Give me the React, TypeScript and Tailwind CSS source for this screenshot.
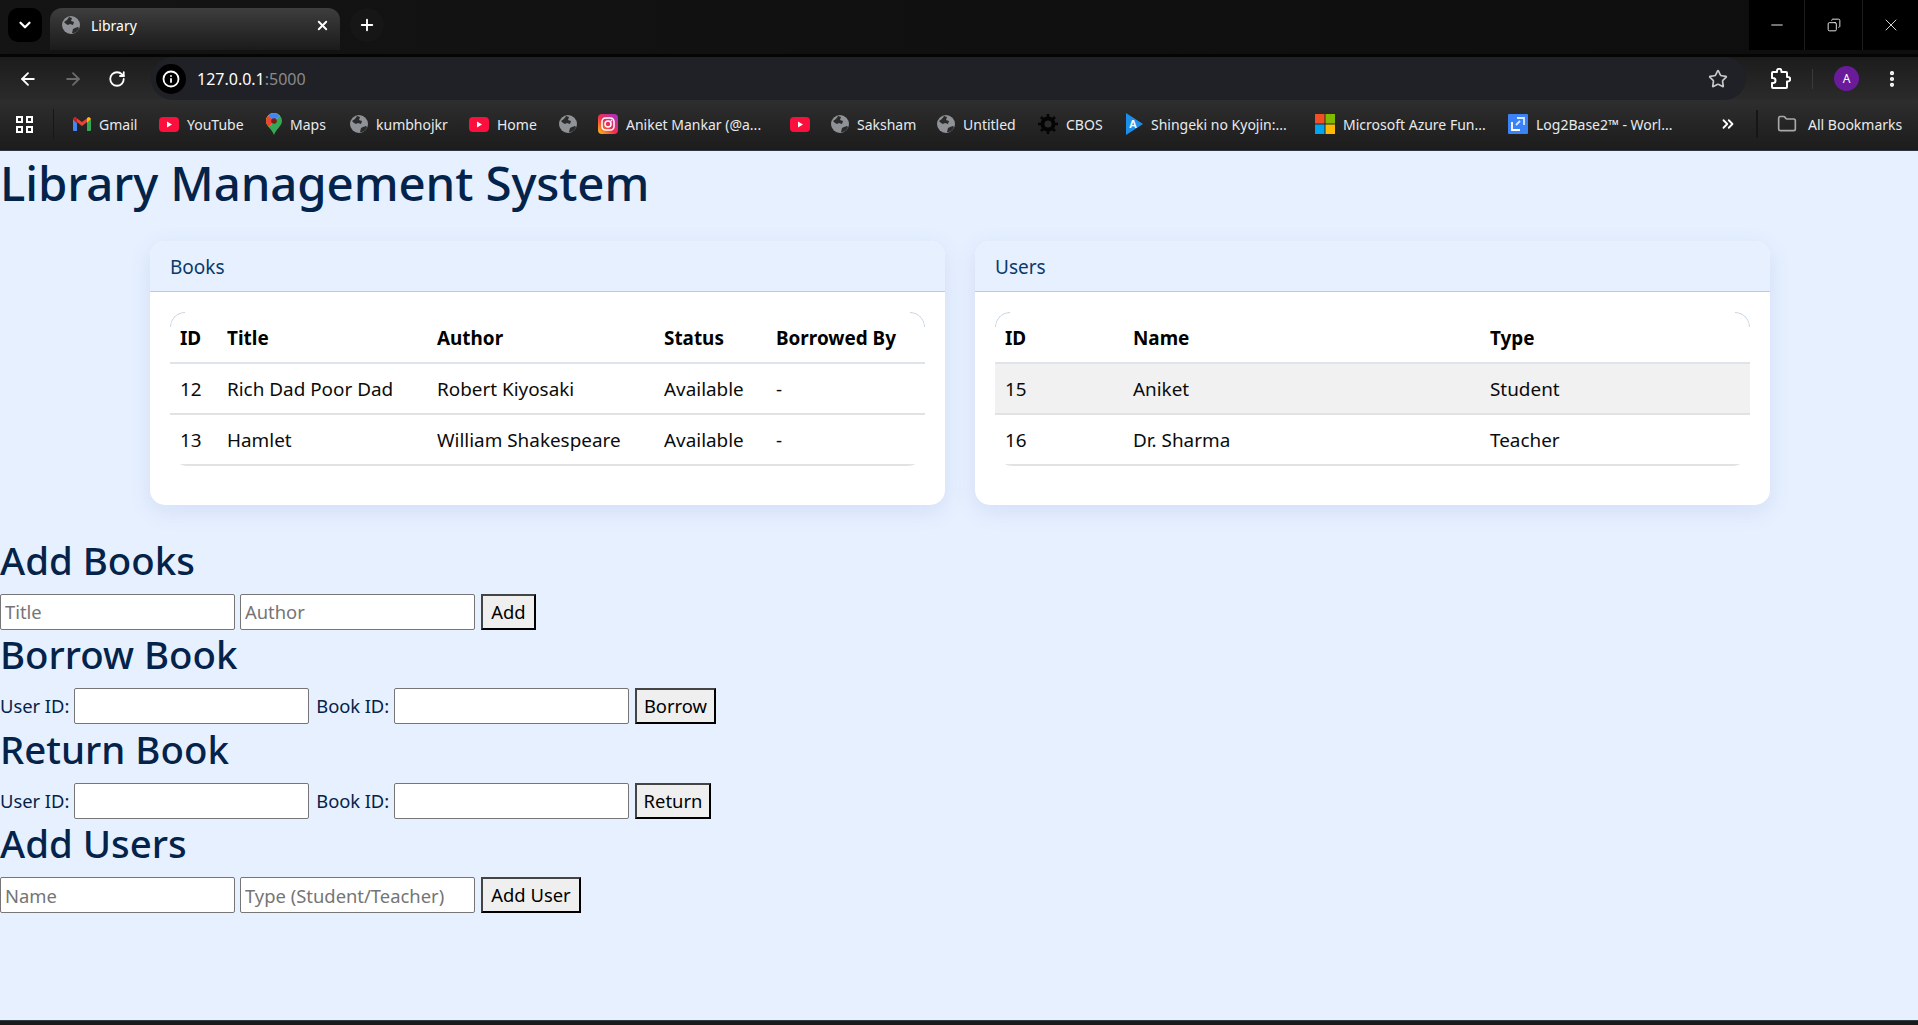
import * as React from "react";
import {
  ArrowLeft,
  ArrowRight,
  ChevronDown,
  ChevronsRight,
  Copy,
  EllipsisVertical,
  Folder,
  Info,
  Minus,
  Plus,
  RotateCw,
  Star,
  X,
} from "lucide-react";

const font = "font-['Noto_Sans',sans-serif]";

function Globe({ className = "w-[18px] h-[18px]" }: { className?: string }) {
  return (
    <svg viewBox="0 0 18 18" className={className}>
      <circle cx="9" cy="9" r="9" fill="#8f9297" />
      <path d="M2 6c2-1 4-3 5-5l3 1-1 3 3 1-1 3-3-1-2 1-2-1z" fill="#2b2b2b" />
      <path d="M10 17l1-4 2-1 3-1 1 1c-1 3-3 5-7 5z" fill="#2b2b2b" />
    </svg>
  );
}

function YouTube() {
  return (
    <svg viewBox="0 0 20 15" className="w-5 h-[15px]">
      <rect width="20" height="15" rx="4" fill="#fb0f3c" />
      <path d="M8 4.5l5 3-5 3z" fill="#fff" />
    </svg>
  );
}

function Gmail() {
  return (
    <svg viewBox="0 0 18 14" className="w-[18px] h-[14px]">
      <path d="M0 2v11a1 1 0 0 0 1 1h3V6z" fill="#4285f4" />
      <path d="M14 6v8h3a1 1 0 0 0 1-1V2z" fill="#34a853" />
      <path d="M0 2l9 7 9-7-2-2-7 5-7-5z" fill="#ea4335" />
      <path d="M0 2l4 4V1L2 0z" fill="#c5221f" />
      <path d="M14 1v5l4-4-2-2z" fill="#fbbc04" />
    </svg>
  );
}

function MapsPin() {
  return (
    <svg viewBox="0 0 16 22" className="w-4 h-[22px]">
      <path d="M8 0a8 8 0 0 1 8 8c0 5-6 8-8 14C6 16 0 13 0 8a8 8 0 0 1 8-8z" fill="#34a853" />
      <path d="M8 0a8 8 0 0 1 6 2.7L3 14C1.500 12 0 10.500 0 8a8 8 0 0 1 8-8z" fill="#fbbc04" />
      <path d="M2 2.700A8 8 0 0 1 8 0a8 8 0 0 1 6 2.700L8 8z" fill="#4285f4" />
      <path d="M0 8a8 8 0 0 1 2-5.300L8 8l-5 6C1.500 12 0 10.500 0 8z" fill="#ea4335" />
      <circle cx="8" cy="8" r="2.800" fill="#7a1f16" />
    </svg>
  );
}

function Instagram() {
  return (
    <svg viewBox="0 0 20 20" className="w-5 h-5">
      <defs>
        <linearGradient id="ig" x1="0" y1="1" x2="1" y2="0">
          <stop offset="0" stopColor="#fdc30d" />
          <stop offset="0.45" stopColor="#f0304f" />
          <stop offset="1" stopColor="#a52fd0" />
        </linearGradient>
      </defs>
      <rect width="20" height="20" rx="4" fill="url(#ig)" />
      <rect x="4" y="4" width="12" height="12" rx="3.500" fill="none" stroke="#fff" strokeWidth="1.500" />
      <circle cx="10" cy="10" r="3" fill="none" stroke="#fff" strokeWidth="1.500" />
      <circle cx="13.500" cy="6.500" r="0.900" fill="#fff" />
    </svg>
  );
}

function Gear() {
  return (
    <svg viewBox="0 0 20 20" className="w-5 h-5">
      <circle cx="10" cy="10" r="5.500" fill="none" stroke="#050505" strokeWidth="4" />
      <g stroke="#050505" strokeWidth="2.600">
        <path d="M10 0v20M0 10h20M3 3l14 14M17 3L3 17" />
      </g>
      <circle cx="10" cy="10" r="3.500" fill="#2a2a2a" />
    </svg>
  );
}

function Shingeki() {
  return (
    <svg viewBox="0 0 17 22" className="w-[17px] h-[22px]">
      <path d="M0 0l17 11L0 22z" fill="#1d8fe8" />
      <text x="3" y="15" fontSize="11" fontWeight="700" fill="#fff" fontFamily="Liberation Sans, sans-serif">
        A
      </text>
    </svg>
  );
}

function Microsoft() {
  return (
    <svg viewBox="0 0 20 20" className="w-5 h-5">
      <rect width="9.500" height="9.500" fill="#f25022" />
      <rect x="10.500" width="9.500" height="9.500" fill="#7fba00" />
      <rect y="10.500" width="9.500" height="9.500" fill="#00a4ef" />
      <rect x="10.500" y="10.500" width="9.500" height="9.500" fill="#ffb900" />
    </svg>
  );
}

function Log2() {
  return (
    <svg viewBox="0 0 20 20" className="w-5 h-5">
      <rect width="20" height="20" rx="1" fill="#3b82f6" />
      <path d="M4 8v8h8" fill="none" stroke="#fff" strokeWidth="1.800" />
      <path d="M9 4h7v7M8 11l4-4" fill="none" stroke="#dbeafe" strokeWidth="1.800" />
    </svg>
  );
}

function ExtensionPuzzle() {
  return (
    <svg viewBox="0 0 22 22" className="w-[22px] h-[22px]" fill="none" stroke="#fff" strokeWidth="2" strokeLinejoin="round">
      <path d="M8 4V3a2.200 2.200 0 0 1 4.400 0v1H17a1 1 0 0 1 1 1v4h1a2.200 2.200 0 0 1 0 4.400h-1V19a1 1 0 0 1-1 1H4a1 1 0 0 1-1-1v-4h1a2.500 2.500 0 0 0 0-5H3V5a1 1 0 0 1 1-1z" />
    </svg>
  );
}

const bookmarks = [
  { icon: <Gmail />, label: "Gmail", w: "w-[86px]" },
  { icon: <YouTube />, label: "YouTube", w: "w-[107px]" },
  { icon: <MapsPin />, label: "Maps", w: "w-[84px]" },
  { icon: <Globe />, label: "kumbhojkr", w: "w-[119px]" },
  { icon: <YouTube />, label: "Home", w: "w-[90px]" },
  { icon: <Globe />, label: "", w: "w-[39px]" },
  { icon: <Instagram />, label: "Aniket Mankar (@a...", w: "w-[192px]" },
  { icon: <YouTube />, label: "", w: "w-[41px]" },
  { icon: <Globe />, label: "Saksham", w: "w-[106px]" },
  { icon: <Globe />, label: "Untitled", w: "w-[101px]" },
  { icon: <Gear />, label: "CBOS", w: "w-[88px]" },
  { icon: <Shingeki />, label: "Shingeki no Kyojin:...", w: "w-[189px]" },
  { icon: <Microsoft />, label: "Microsoft Azure Fun...", w: "w-[193px]" },
  { icon: <Log2 />, label: "Log2Base2™ - Worl...", w: "w-[210px]" },
];

function BrowserChrome() {
  return (
    <div className={`${font} shrink-0 bg-[#050505]`}>
      {/* Tab strip */}
      <div className="h-[54px] flex items-start justify-between bg-gradient-to-r from-[#141414] via-[#101010] to-[#0e0e0e]">
        <div className="flex items-start pt-2 pl-2">
          <div className="w-[34px] h-[34px] rounded-[10px] bg-black flex items-center justify-center">
            <ChevronDown className="w-[18px] h-[18px] text-white" strokeWidth={3} />
          </div>
          <div className="ml-[8px] w-[290px] h-[42px] rounded-t-[12px] bg-gradient-to-b from-[#3e3e3e] to-[#1b1b1b] flex items-center pl-3 pr-[10px] pb-2">
            <Globe className="w-[18px] h-[18px]" />
            <span className="ml-[11px] text-[14px] text-white flex-1">Library</span>
            <X className="w-[15px] h-[15px] text-white" strokeWidth={3} />
          </div>
          <div className="ml-[10px] w-[34px] h-[34px] rounded-full bg-[#161616] flex items-center justify-center">
            <Plus className="w-[18px] h-[18px] text-white" strokeWidth={2.500} />
          </div>
        </div>
        <div className="flex h-[50px] bg-black text-white">
          <div className="w-[56px] flex items-center justify-center border-r border-[#1d1d1d]">
            <Minus className="w-[18px] h-[18px]" strokeWidth={1.200} />
          </div>
          <div className="w-[58px] flex items-center justify-center border-r border-[#1d1d1d]">
            <Copy className="w-[14px] h-[14px] -scale-x-100" strokeWidth={1.500} />
          </div>
          <div className="w-[55px] flex items-center justify-center">
            <X className="w-[20px] h-[20px]" strokeWidth={1} />
          </div>
        </div>
      </div>

      {/* Toolbar */}
      <div className="mt-[3px] h-[43px] flex items-center bg-gradient-to-b from-[#1c1c1c] to-[#2b2b2b]">
        <div className="w-[151px] flex items-center pl-[18px] gap-[25px]">
          <ArrowLeft className="w-5 h-5 text-white" strokeWidth={2.200} />
          <ArrowRight className="w-5 h-5 text-[#6b6b6b]" strokeWidth={2.200} />
          <RotateCw className="w-[18px] h-[18px] text-white" strokeWidth={2.400} />
        </div>
        <div className="w-[1595px] h-[43px] rounded-full bg-[#1f2126] flex items-center pl-[5px] pr-[18px]">
          <div className="w-[30px] h-[30px] rounded-full bg-black flex items-center justify-center">
            <Info className="w-[18px] h-[18px] text-white" strokeWidth={2.400} />
          </div>
          <span className="ml-[11px] text-[16px] text-white flex-1">
            127.0.0.1<span className="text-[#8a8a8a]">:5000</span>
          </span>
          <Star className="w-[20px] h-[20px] text-[#c8c8c8]" strokeWidth={2} />
        </div>
        <div className="flex-1 flex items-center pl-[23px]">
          <ExtensionPuzzle />
          <div className="ml-[21px] w-px h-5 bg-[#3a3a3a]" />
          <div className="ml-[21px] w-[25px] h-[25px] rounded-full bg-[#6a1b9a] flex items-center justify-center text-[12px] text-white">
            A
          </div>
          <EllipsisVertical className="ml-[23px] w-[20px] h-[20px] text-white" strokeWidth={3} />
        </div>
      </div>

      {/* Bookmarks bar */}
      <div className="h-[51px] flex items-center bg-gradient-to-b from-[#2e2e2e] to-[#1c1c1c] border-b border-[#2f3542] pb-[2px]">
        <div className="w-[53px] pl-[16px]">
          <div className="w-[17px] h-[17px] grid grid-cols-2 gap-[3px]">
            <div className="border-2 border-white" />
            <div className="border-2 border-white" />
            <div className="border-2 border-white" />
            <div className="border-2 border-white" />
          </div>
        </div>
        <div className="w-px h-[30px] bg-[#161616]" />
        <div className="ml-[19px] w-[1648px] flex items-center text-[14px] text-[#e8eaed]">
          {bookmarks.map((b, i) => (
            <div key={i} className={`${b.w} shrink-0 flex items-center gap-[8px]`}>
              {b.icon}
              {b.label && <span className="whitespace-nowrap">{b.label}</span>}
            </div>
          ))}
        </div>
        <ChevronsRight className="w-[18px] h-[18px] text-white -ml-[2px]" strokeWidth={2.400} />
        <div className="ml-[19px] w-[2px] h-[28px] bg-[#161616]" />
        <Folder className="ml-[19px] w-[20px] h-[20px] text-[#a8a8a8]" strokeWidth={2} />
        <span className="ml-[11px] text-[14px] text-[#e8eaed] whitespace-nowrap">All Bookmarks</span>
      </div>
    </div>
  );
}

type Col = { label: string; w: string };

function DataCard({
  title,
  cols,
  rows,
  hoverRow,
}: {
  title: string;
  cols: Col[];
  rows: string[][];
  hoverRow?: number;
}) {
  return (
    <div className="w-[795px] rounded-[15px] bg-white shadow-[0_6px_22px_rgba(70,100,170,0.12)] overflow-hidden">
      <div className="h-[51px] bg-[#e6f0ff] border-b border-[#bfc9dc] pl-5 pt-[2px] flex items-center text-[19px] text-[#0a3a6b]">
        {title}
      </div>
      <div className="px-5 pt-5 pb-[39px]">
        <div className="relative rounded-t-[15px] rounded-b-[18px] overflow-hidden">
          {/* faint arcs left by the rounded table wrapper */}
          <div className="absolute left-0 top-0 w-[15px] h-[15px] rounded-tl-[15px] border-t border-l border-[#c4d2e4]" />
          <div className="absolute right-0 top-0 w-[15px] h-[15px] rounded-tr-[15px] border-t border-r border-[#c4d2e4]" />
          <table className="w-full table-fixed border-collapse text-[18.9px] text-[#0b0b0b]">
            <thead>
              <tr className="h-[51px] border-b-2 border-[#dfe3ea] text-black">
                {cols.map((c) => (
                  <th key={c.label} className={`${c.w} pl-[10px] pt-[2px] text-left font-bold`}>
                    {c.label}
                  </th>
                ))}
              </tr>
            </thead>
            <tbody>
              {rows.map((r, i) => (
                <tr
                  key={i}
                  className={`h-[51px] border-b-2 border-[#e2e2e4] ${i === hoverRow ? "bg-[#f1f1f1]" : ""}`}
                >
                  {r.map((v, j) => (
                    <td key={j} className="pl-[10px] pt-[2px] whitespace-nowrap">
                      {v}
                    </td>
                  ))}
                </tr>
              ))}
            </tbody>
          </table>
        </div>
      </div>
    </div>
  );
}

function Field({ placeholder }: { placeholder?: string }) {
  return (
    <input
      placeholder={placeholder}
      className="w-[235px] h-[36px] bg-white border border-[#767676] rounded-[2px] pl-[4px] text-[18.4px] placeholder:text-[#757575] outline-none"
    />
  );
}

function Btn({ w, children }: { w: string; children: React.ReactNode }) {
  return (
    <button
      className={`${w} ml-[1px] h-[36px] bg-[#efefef] border-2 border-black border-t-[#444] border-l-[#444] text-[18.4px] text-black`}
    >
      {children}
    </button>
  );
}

function Heading({ children }: { children: React.ReactNode }) {
  return (
    <h2 className="h-[58.5px] pb-[7px] flex items-center text-[38.4px] font-medium text-[#04234a]">
      {children}
    </h2>
  );
}

function IdRow({ action, w }: { action: string; w: string }) {
  return (
    <div className="flex items-center h-[36px] gap-[5px]">
      <span className="tracking-[-0.03px]">User ID:</span>
      <Field />
      <span className="ml-[2px] tracking-[-0.1px]">Book ID:</span>
      <Field />
      <Btn w={w}>{action}</Btn>
    </div>
  );
}

export default function App() {
  return (
    <div className={`${font} h-screen flex flex-col overflow-hidden bg-[#e6f0ff]`}>
      <BrowserChrome />
      <main className="flex-1">
        <h1 className="h-[64px] flex items-center text-[47.4px] tracking-[-0.1px] font-medium text-[#04234a]">
          Library Management System
        </h1>
        <div className="mt-[26px] pl-[150px] flex gap-[30px]">
          <DataCard
            title="Books"
            cols={[
              { label: "ID", w: "w-[47px]" },
              { label: "Title", w: "w-[210px]" },
              { label: "Author", w: "w-[227px]" },
              { label: "Status", w: "w-[112px]" },
              { label: "Borrowed By", w: "w-[159px]" },
            ]}
            rows={[
              ["12", "Rich Dad Poor Dad", "Robert Kiyosaki", "Available", "-"],
              ["13", "Hamlet", "William Shakespeare", "Available", "-"],
            ]}
          />
          <DataCard
            title="Users"
            cols={[
              { label: "ID", w: "w-[128px]" },
              { label: "Name", w: "w-[357px]" },
              { label: "Type", w: "w-[270px]" },
            ]}
            rows={[
              ["15", "Aniket", "Student"],
              ["16", "Dr. Sharma", "Teacher"],
            ]}
            hoverRow={0}
          />
        </div>

        <div className="mt-[30px] text-[18.4px] text-[#04234a]">
          <Heading>Add Books</Heading>
          <div className="flex items-center h-[36px] gap-[5px]">
            <Field placeholder="Title" />
            <Field placeholder="Author" />
            <Btn w="w-[55px]">Add</Btn>
          </div>
          <Heading>Borrow Book</Heading>
          <IdRow action="Borrow" w="w-[81px]" />
          <Heading>Return Book</Heading>
          <IdRow action="Return" w="w-[76px]" />
          <Heading>Add Users</Heading>
          <div className="flex items-center h-[36px] gap-[5px]">
            <Field placeholder="Name" />
            <Field placeholder="Type (Student/Teacher)" />
            <Btn w="w-[100px]">Add User</Btn>
          </div>
        </div>
      </main>
      <div className="h-[5px] shrink-0 bg-[#1a1a1a] border-t border-[#333c44]" />
    </div>
  );
}
